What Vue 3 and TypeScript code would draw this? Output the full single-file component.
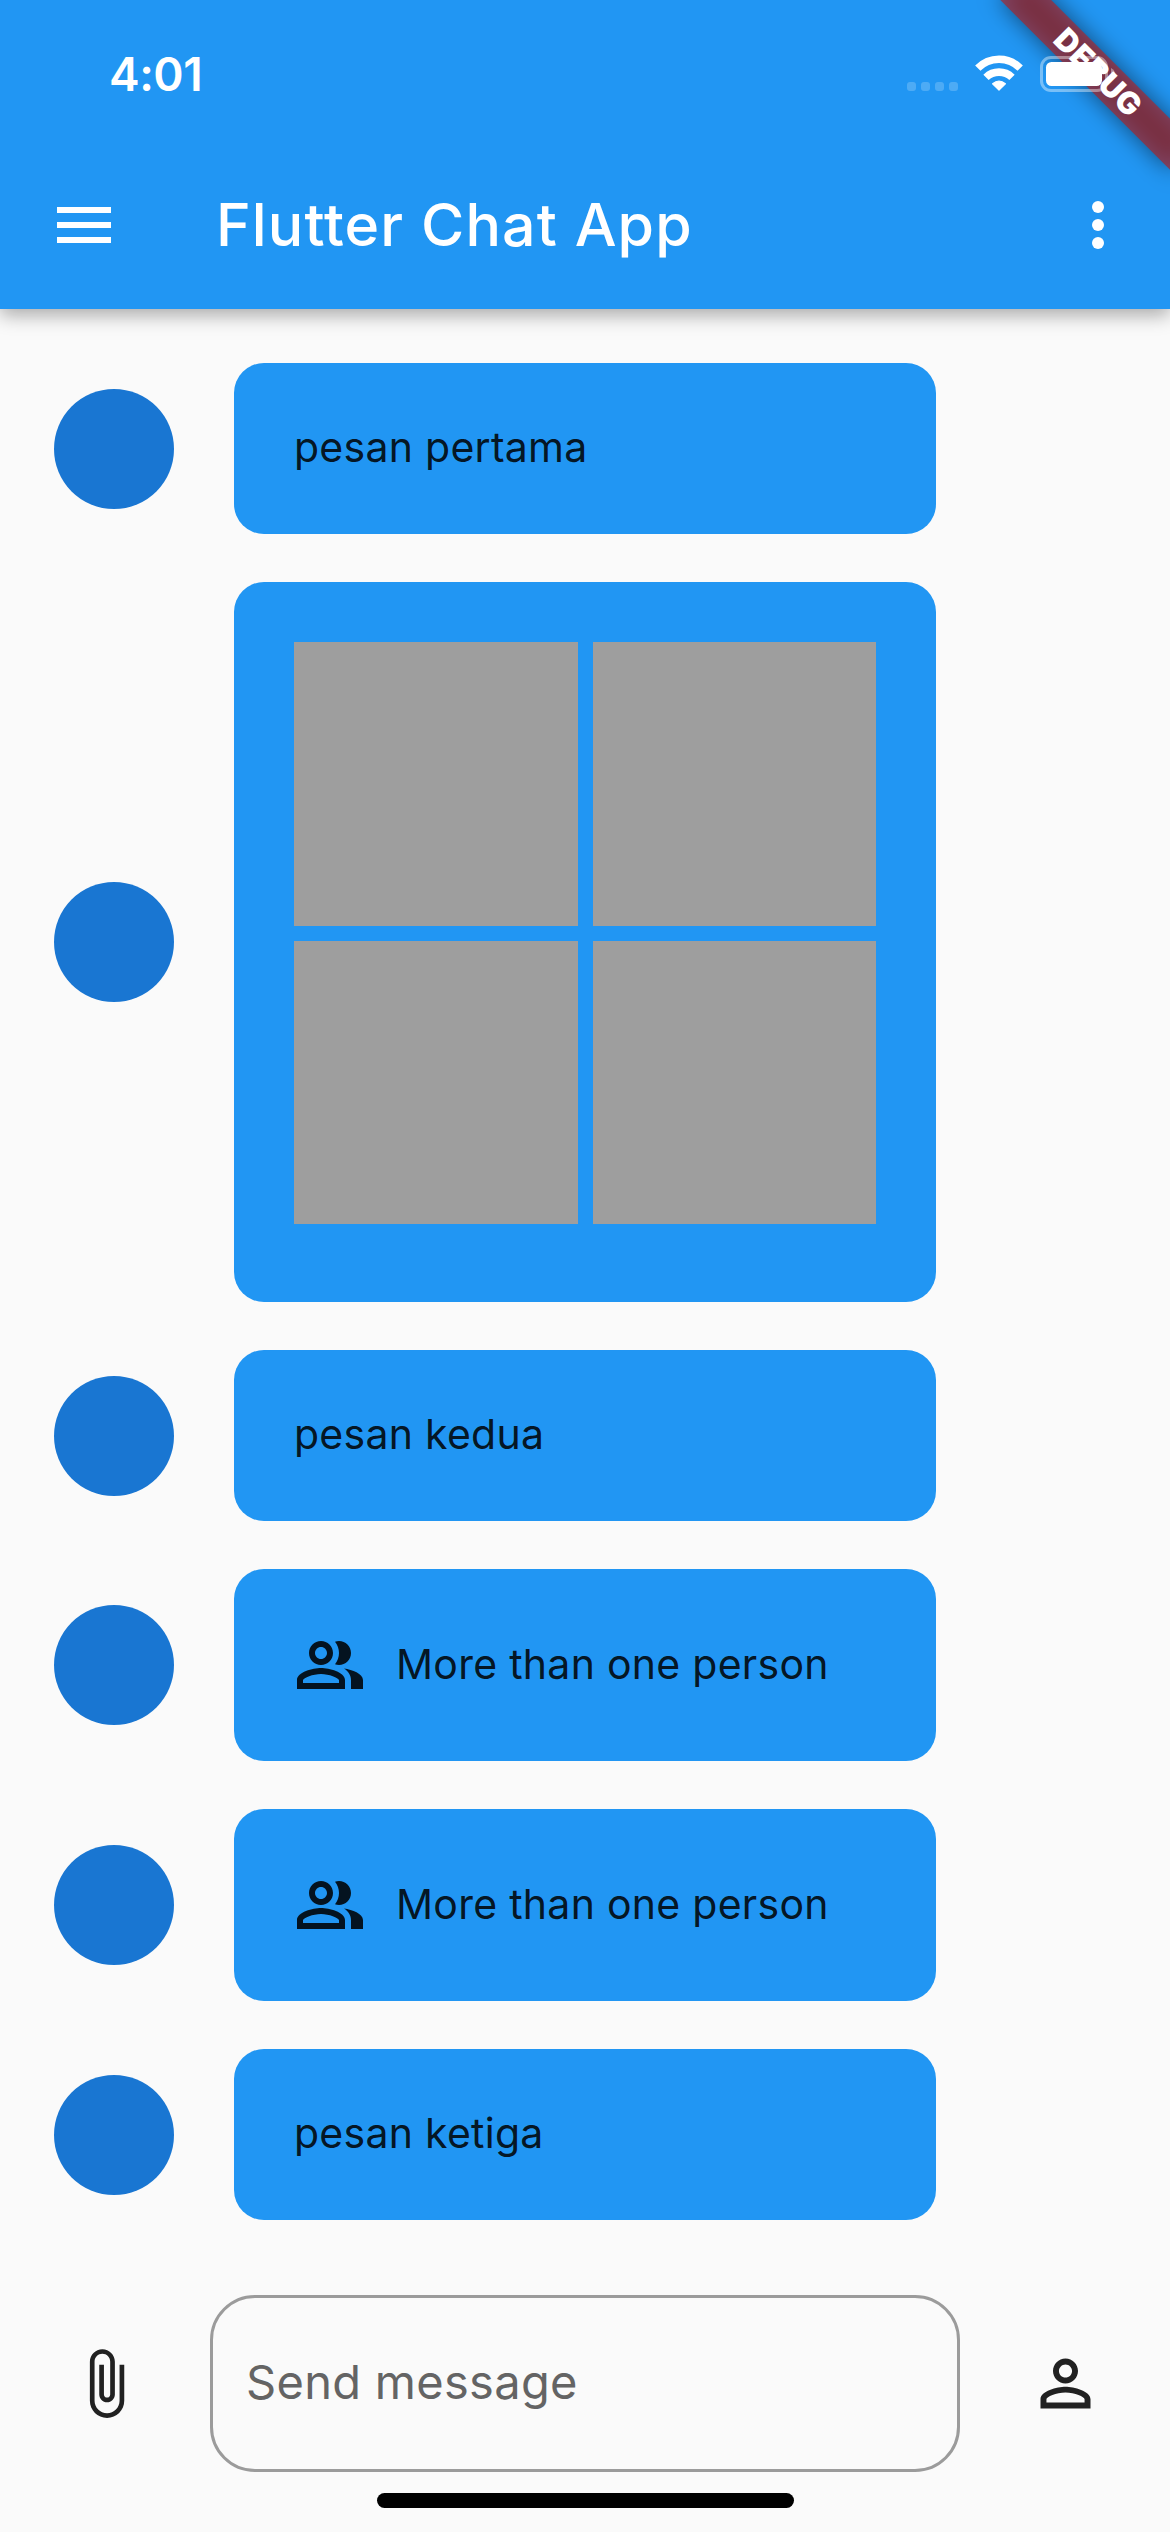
<script setup lang="ts">
interface TextMessage {
  id: number
  kind: 'text' | 'group'
  text: string
}
interface GalleryMessage {
  id: number
  kind: 'gallery'
  count: number
}
type Message = TextMessage | GalleryMessage

const title = 'Flutter Chat App'
const time = '4:01'

const messages: Message[] = [
  { id: 1, kind: 'text', text: 'pesan pertama' },
  { id: 2, kind: 'gallery', count: 4 },
  { id: 3, kind: 'text', text: 'pesan kedua' },
  { id: 4, kind: 'group', text: 'More than one person' },
  { id: 5, kind: 'group', text: 'More than one person' },
  { id: 6, kind: 'text', text: 'pesan ketiga' },
]
</script>

<template>
  <div class="screen">
    <header class="header">
      <div class="status">
        <span class="time">{{ time }}</span>
        <div class="indicators">
          <div class="signal"><i v-for="n in 4" :key="n"></i></div>
          <svg class="wifi" width="50" height="38" viewBox="974 54 50 38">
            <path d="M977.8 68.2A29.6 29.6 0 0 1 1020.2 68.2" fill="none" stroke="#fff" stroke-width="7.4" />
            <path d="M986 77.4A18.6 18.6 0 0 1 1012 77.4" fill="none" stroke="#fff" stroke-width="7.6" />
            <path d="M992.6 83.8Q999 78.2 1005.4 83.8L999 90.2Z" fill="#fff" stroke="#fff" stroke-width="1.2" stroke-linejoin="round" />
          </svg>
          <svg class="battery" width="75" height="36" viewBox="0 0 75 36">
            <rect x="1.5" y="1.5" width="65" height="33" rx="9.5" fill="none" stroke="#fff" stroke-opacity=".4" stroke-width="3" />
            <rect x="6" y="6" width="56" height="24" rx="5.5" fill="#fff" />
            <path d="M71 12Q75 14 75 18T71 24Z" fill="#fff" fill-opacity=".4" />
          </svg>
        </div>
      </div>
      <div class="appbar">
        <svg class="icon" viewBox="0 0 24 24"><path d="M3 18h18v-2H3v2zm0-5h18v-2H3v2zm0-7v2h18V6H3z" /></svg>
        <h1 class="title">{{ title }}</h1>
        <svg class="icon" viewBox="0 0 24 24">
          <circle cx="12" cy="6" r="2" /><circle cx="12" cy="12" r="2" /><circle cx="12" cy="18" r="2" />
        </svg>
      </div>
      <svg class="banner" width="240" height="240" viewBox="0 0 240 240">
        <defs>
          <filter id="banner-shadow" x="-60" y="20" width="360" height="170" filterUnits="userSpaceOnUse">
            <feGaussianBlur stdDeviation="11.9" />
          </filter>
        </defs>
        <g transform="translate(240 0) rotate(45)">
          <g transform="translate(-120 0)">
            <rect x="0" y="84" width="240" height="36" fill="#000" fill-opacity=".5" filter="url(#banner-shadow)" />
            <rect x="0" y="84" width="240" height="36" fill="#b71c1c" fill-opacity=".627" />
            <text class="banner-text" x="120.5" y="113" text-anchor="middle">DEBUG</text>
          </g>
        </g>
      </svg>
    </header>

    <main class="messages">
      <div v-for="m in messages" :key="m.id" class="row">
        <div class="avatar"></div>
        <div class="bubble" :class="m.kind">
          <template v-if="m.kind === 'gallery'">
            <div v-for="n in m.count" :key="n" class="photo"></div>
          </template>
          <template v-else>
            <svg v-if="m.kind === 'group'" class="icon" viewBox="0 0 24 24">
              <path d="M16.67 13.13C18.04 14.06 19 15.32 19 17v3h4v-3c0-2.18-3.57-3.47-6.33-3.87z" />
              <path d="M15 12c2.21 0 4-1.79 4-4s-1.79-4-4-4c-.47 0-.91.1-1.33.24C14.5 5.27 15 6.58 15 8s-.5 2.73-1.33 3.76c.42.14.86.24 1.33.24z" />
              <path d="M9 12c2.21 0 4-1.79 4-4s-1.79-4-4-4-4 1.79-4 4 1.79 4 4 4zm0-6c1.1 0 2 .9 2 2s-.9 2-2 2-2-.9-2-2 .9-2 2-2z" />
              <path d="M9 13c-2.67 0-8 1.34-8 4v3h16v-3c0-2.66-5.33-4-8-4zm6 5H3v-.99C3.2 16.29 6.3 15 9 15s5.8 1.29 6 2v1z" />
            </svg>
            <span class="text">{{ m.text }}</span>
          </template>
        </div>
      </div>
    </main>

    <footer class="composer">
      <div class="action">
        <svg class="icon" viewBox="0 0 24 24">
          <path d="M16.5 6v11.5c0 2.21-1.79 4-4 4s-4-1.79-4-4V5c0-1.38 1.12-2.5 2.5-2.5s2.5 1.12 2.5 2.5v10.5c0 .55-.45 1-1 1s-1-.45-1-1V6H10v9.5c0 1.38 1.12 2.5 2.5 2.5s2.5-1.12 2.5-2.5V5c0-2.21-1.79-4-4-4S7 2.79 7 5v12.5c0 3.04 2.46 5.5 5.5 5.5s5.5-2.46 5.5-5.5V6h-1.5z" />
        </svg>
      </div>
      <div class="field"><span>Send message</span></div>
      <div class="action">
        <svg class="icon" viewBox="0 0 24 24">
          <path d="M12 5.9c1.16 0 2.1.94 2.1 2.1s-.94 2.1-2.1 2.1S9.9 9.16 9.9 8s.94-2.1 2.1-2.1m0 9c2.97 0 6.1 1.46 6.1 2.1v1.1H5.9V17c0-.64 3.13-2.1 6.1-2.1M12 4C9.79 4 8 5.79 8 8s1.79 4 4 4 4-1.79 4-4-1.79-4-4-4zm0 9c-2.67 0-8 1.34-8 4v3h16v-3c0-2.66-5.33-4-8-4z" />
        </svg>
      </div>
    </footer>
    <div class="home-indicator"></div>
  </div>
</template>

<style>
body {
  margin: 0;
  background: #fafafa;
}
</style>

<style scoped>
.screen {
  width: 1170px;
  height: 2532px;
  display: flex;
  flex-direction: column;
  overflow: hidden;
  background: #fafafa;
  font-family: Inter, 'Liberation Sans', sans-serif;
}
.icon {
  width: 72px;
  height: 72px;
  flex: none;
  display: block;
  fill: currentColor;
}
.header {
  position: relative;
  flex: none;
  height: 309px;
  background: #2196f3;
  color: #fff;
  box-shadow: 0 6px 18px rgba(0, 0, 0, 0.33);
}
.status {
  position: relative;
  z-index: 2;
  box-sizing: border-box;
  height: 141px;
  padding: 54px 55px 0 109px;
  display: flex;
  justify-content: space-between;
  align-items: flex-start;
}
.time {
  font-size: 46px;
  line-height: 41px;
  font-weight: 600;
  letter-spacing: -0.5px;
}
.indicators {
  display: flex;
  align-items: flex-start;
}
.signal {
  display: flex;
  gap: 5px;
  padding-top: 28px;
}
.signal i {
  width: 9px;
  height: 9px;
  border-radius: 3px;
  background: rgba(255, 255, 255, 0.2);
}
.wifi {
  margin-left: 16px;
}
.battery {
  margin: 2px 0 0 16px;
}
.appbar {
  height: 168px;
  box-sizing: border-box;
  padding: 0 36px 0 48px;
  display: flex;
  align-items: center;
}
.title {
  flex: 1;
  margin: 0 0 0 96px;
  font-size: 59px;
  line-height: 72px;
  font-weight: 500;
  letter-spacing: 1.1px;
}
.banner {
  position: absolute;
  top: 0;
  right: 0;
  z-index: 1;
}
.banner-text {
  font-size: 31px;
  font-weight: 900;
  letter-spacing: 0.3px;
  fill: #fff;
}
.messages {
  flex: none;
  display: flex;
  flex-direction: column;
  gap: 48px;
  padding: 54px 54px 0;
}
.row {
  display: flex;
  align-items: center;
  gap: 60px;
}
.avatar {
  flex: none;
  width: 120px;
  height: 120px;
  border-radius: 50%;
  background: #1976d2;
}
.bubble {
  box-sizing: border-box;
  width: 702px;
  height: 171px;
  padding: 0 60px;
  border-radius: 30px;
  background: #2196f3;
  color: rgba(0, 0, 0, 0.87);
  display: flex;
  align-items: center;
}
.bubble.group {
  height: 192px;
  gap: 30px;
}
.bubble.gallery {
  height: 720px;
  padding: 60px;
  display: grid;
  grid-template-columns: 1fr 1fr;
  grid-auto-rows: 283.5px;
  gap: 15px;
  align-content: start;
  align-items: stretch;
}
.photo {
  background: #9e9e9e;
}
.text {
  font-size: 41px;
  line-height: 48px;
  letter-spacing: 0.27px;
  padding-bottom: 2px;
  white-space: nowrap;
}
.composer {
  flex: none;
  margin-top: 75px;
  height: 177px;
  display: flex;
}
.action {
  width: 210px;
  display: flex;
  align-items: center;
  justify-content: center;
  color: #212121;
}
.action .icon {
  width: 75px;
  height: 75px;
}
.field {
  flex: 1;
  box-sizing: border-box;
  border: 3px solid #9b9b9b;
  border-radius: 45px;
  padding: 0 33px 4px;
  display: flex;
  align-items: center;
  font-size: 47px;
  line-height: 57px;
  letter-spacing: 0.3px;
  color: #646464;
}
.home-indicator {
  flex: none;
  width: 417px;
  height: 15px;
  margin: 21px auto 0;
  border-radius: 7.5px;
  background: #000;
}
</style>
